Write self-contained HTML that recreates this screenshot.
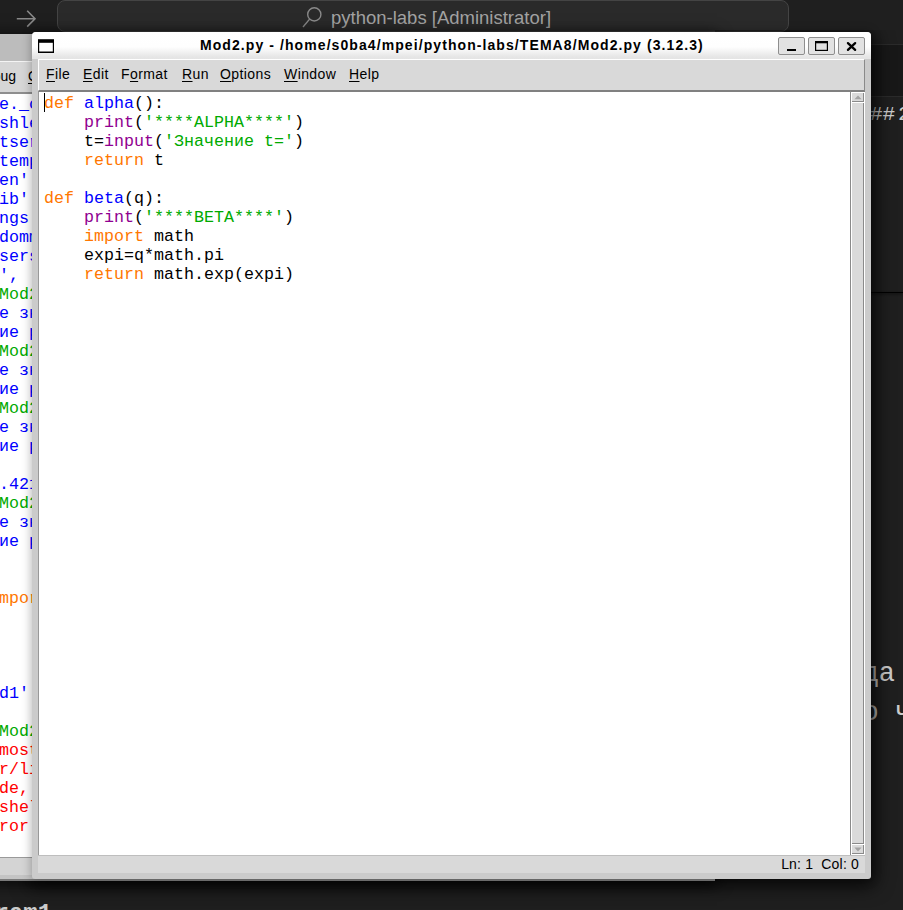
<!DOCTYPE html>
<html><head><meta charset="utf-8">
<style>
html,body{margin:0;padding:0}
body{width:903px;height:910px;overflow:hidden;position:relative;background:#1f1f1f;font-family:"Liberation Sans",sans-serif}
.a{position:absolute}
/* top bar */
#topbar{left:0;top:0;width:903px;height:33px;background:#1f1f1f}
#search{left:57px;top:0px;width:732px;height:32px;background:#2a2a2a;border:1px solid #444;border-radius:8px;box-sizing:border-box}
#stext{left:331px;top:7px;font-size:18.5px;color:#a3a3a3;white-space:nowrap}
/* behind window */
#bw{left:-20px;top:34px;width:735px;height:847px;background:#c6c6c6;box-shadow:0 2px 14px 2px rgba(0,0,0,0.7)}
#bwtitle{left:0;top:0;width:735px;height:27px;background:#bcbcbc}
#bwmenu{left:0;top:27px;width:735px;height:31px;background:#d6d6d6;border-top:1px solid #f4f4f4;border-bottom:2px solid #8e8e8e;box-sizing:border-box;height:33px}
#bwtext{left:0;top:60px;width:735px;height:763px;background:#fff}
#bwstatus{left:0;top:823px;width:735px;height:18px;background:#d4d4d4;border-top:1px solid #9a9a9a;box-sizing:border-box}
#bwedge{left:0;top:841px;width:735px;height:6px;background:#c4c4c4;border-bottom:2px solid #7a7a7a;box-sizing:border-box}
.mono{font-family:"Liberation Mono",monospace;font-size:16.6667px;line-height:19px;white-space:pre}
#bwlines{left:19px;top:61px}
/* main window */
#mw{left:32px;top:32px;width:839px;height:847px;background:#cbcbcb;border-radius:4px 4px 3px 3px;box-shadow:0 0 10px 1px rgba(0,0,0,0.28)}
#title{left:0;top:0;width:839px;height:27px;border-radius:4px 4px 0 0;background:linear-gradient(#ffffff 0%,#fefefe 55%,#e6e6e6 92%,#e4e4e4 100%)}
#ttext{left:168px;top:5px;font-size:14px;letter-spacing:1.08px;font-weight:bold;color:#000;white-space:nowrap}
#icon{left:6px;top:7px;width:16px;height:14px;box-sizing:border-box;border:2px solid #000;border-top:5px solid #000;background:#fff}
.btn{top:5px;width:27px;height:18px;box-sizing:border-box;border:1px solid #8e8e8e;border-radius:2px;background:#e2e2e2}
#menu{left:6px;top:27px;width:827px;height:32px;background:#d9d9d9;box-sizing:border-box;border-top:1px solid #fff;border-left:1px solid #fff;border-right:1px solid #8a8a8a;border-bottom:1px solid #808080}
.mi{top:6px;font-size:14px;letter-spacing:0.4px;color:#000;white-space:nowrap}
.mi u{text-decoration:underline;text-decoration-thickness:1px;text-underline-offset:2px}
#text{left:6px;top:59px;width:812px;height:764px;background:#fff;box-sizing:border-box;border-left:1px solid #999;border-top:1px solid #808080}
#sb{left:818px;top:59px;width:15px;height:764px;background:#fff;box-sizing:border-box;border-left:1px solid #8a8a8a;border-top:1px solid #808080}
.sbb{left:1px;width:12px;box-sizing:border-box;background:#dadada;border-right:1px solid #8a8a8a;border-bottom:1px solid #8a8a8a}
#status{left:6px;top:823px;width:827px;height:18px;background:#d9d9d9;border-top:1px solid #bebebe;box-sizing:border-box}
#stat{right:6px;top:0px;font-size:14px;letter-spacing:0.18px;color:#000;white-space:nowrap}
#code{left:12px;top:62px}
.k{color:#ff7700}.b{color:#900090}.s{color:#00aa00}.d{color:#0000ff}
#cursor{left:12px;top:61px;width:1px;height:19px;background:#000}
/* dark bg text */
.dt{color:#cccccc;white-space:nowrap}
</style></head>
<body>
<div class="a" id="topbar"></div>
<div class="a" style="left:0;top:44px;width:903px;height:53px;background:#181818;border-top:1px solid #2b2b2b;border-bottom:1px solid #2b2b2b;box-sizing:border-box"></div>
<div class="a" style="left:0;top:292px;width:903px;height:1px;background:#000;box-shadow:0 1px 3px rgba(0,0,0,0.8)"></div>
<div class="a" id="search"></div>
<svg class="a" style="left:14px;top:8px" width="24" height="22" viewBox="0 0 24 22"><path d="M2.8 10.7H21M13.2 2.8L21 10.7L13.2 18.6" fill="none" stroke="#8a8a8a" stroke-width="1.6"/></svg>
<svg class="a" style="left:300px;top:5px" width="24" height="24" viewBox="0 0 24 24"><circle cx="14.3" cy="9.4" r="6.6" fill="none" stroke="#8a8a8a" stroke-width="1.4"/><path d="M9.6 14.1L3 22" stroke="#8a8a8a" stroke-width="1.4"/></svg>
<div class="a" id="stext">python-labs [Administrator]</div>

<div class="a dt" id="h2a" style="left:870px;top:103px;font-family:'Liberation Mono',monospace;font-size:21px;line-height:24px">##</div>
<div class="a dt" id="h2b" style="left:898px;top:103px;font-family:'Liberation Mono',monospace;font-size:21px;line-height:24px">2</div>
<div class="a dt" id="da" style="left:862.5px;top:653.5px;font-family:'Liberation Mono',monospace;font-size:27px;line-height:40px">да</div>
<div class="a dt" id="och" style="left:862.5px;top:692.5px;font-family:'Liberation Mono',monospace;font-size:27px;line-height:40px">о ч</div>
<div class="a dt" id="ram" style="left:-5.5px;top:900px;font-family:'Liberation Mono',monospace;font-size:24px;font-weight:bold;line-height:28px">ram1</div>

<!-- behind window -->
<div class="a" id="bw">
  <div class="a" id="bwtitle"></div>
  <div class="a" id="bwmenu"></div>
  <div class="a" id="bwtext"></div>
  <div class="a" id="bwstatus"></div>
  <div class="a" id="bwedge"></div>
  <div class="a" style="right:699px;top:33.5px;font-size:14px;white-space:nowrap">Debug</div><div class="a mi2" style="left:48px;top:33.5px;font-size:14px;white-space:nowrap"><span style="text-decoration:underline;text-decoration-thickness:1px;text-underline-offset:2px">O</span>ptions</div>
  <div class="a mono" id="bwlines"><span class="d">e._c</span>
<span class="d">shle</span>
<span class="d">tser</span>
<span class="d">temp</span>
<span class="d">en' </span>
<span class="d">ib' </span>
<span class="d">ngs </span>
<span class="d">domm</span>
<span class="d">sers</span>
<span class="d">',  </span>
<span class="s">Mod2</span>
<span class="d">е зн</span>
<span class="d">ие р</span>
<span class="s">Mod2</span>
<span class="d">е зн</span>
<span class="d">ие р</span>
<span class="s">Mod2</span>
<span class="d">е зн</span>
<span class="d">ие р</span>

<span class="d">.421</span>
<span class="s">Mod2</span>
<span class="d">е зн</span>
<span class="d">ие р</span>


<span class="k">mpor</span>




<span class="d">d1' </span>

<span class="s">Mod2</span>
<span style="color:#ff0000">most</span>
<span style="color:#ff0000">r/li</span>
<span style="color:#ff0000">de, </span>
<span style="color:#ff0000">shel</span>
<span style="color:#ff0000">ror </span></div>
</div>

<div class="a" style="left:0;top:0;width:903px;height:910px;clip-path:polygon(715px 30px,903px 30px,903px 910px,0px 910px,0px 881px,715px 881px)"><div class="a" style="left:32px;top:34px;width:839px;height:845px;border-radius:4px;box-shadow:0 3px 18px 5px rgba(0,0,0,0.7)"></div></div>
<!-- main window -->
<div class="a" id="mw">
  <div class="a" id="title"></div>
  <svg class="a" style="left:6px;top:7px" width="16" height="14" viewBox="0 0 16 14"><rect x="0" y="0.2" width="16" height="13.8" fill="#000"/><rect x="1.2" y="3.8" width="13.6" height="8.7" fill="#fff"/></svg>
  <div class="a" id="ttext">Mod2.py - /home/s0ba4/mpei/python-labs/TEMA8/Mod2.py (3.12.3)</div>
  <div class="a btn" style="left:746px"><div class="a" style="left:8px;top:11px;width:9px;height:2px;background:#000"></div></div>
  <div class="a btn" style="left:776px"><svg class="a" style="left:6px;top:3px" width="13" height="10" viewBox="0 0 13 10"><rect x="0.6" y="0.6" width="11.8" height="8.8" fill="none" stroke="#000" stroke-width="1.2"/><rect x="0" y="0" width="13" height="2.3" fill="#000"/></svg></div>
  <div class="a btn" style="left:806px"><svg class="a" style="left:7px;top:3px" width="13" height="12" viewBox="0 0 13 12"><path d="M1.95 2.15L9.15 8.85M9.15 2.15L1.95 8.85" stroke="#000" stroke-width="2.3" stroke-linecap="round"/></svg></div>
  <div class="a" id="menu">
    <div class="a mi" style="left:7px"><u>F</u>ile</div>
    <div class="a mi" style="left:44px"><u>E</u>dit</div>
    <div class="a mi" style="left:82px">F<u>o</u>rmat</div>
    <div class="a mi" style="left:143px"><u>R</u>un</div>
    <div class="a mi" style="left:181px"><u>O</u>ptions</div>
    <div class="a mi" style="left:245px"><u>W</u>indow</div>
    <div class="a mi" style="left:310px"><u>H</u>elp</div>
  </div>
  <div class="a" id="text"></div>
  <div class="a" id="sb">
    <div class="a sbb" style="top:1px;height:9px"><svg class="a" style="left:1.5px;top:1.5px" width="8" height="5" viewBox="0 0 8 5"><path d="M0.4 4.3L4 0.4L7.6 4.3Z" fill="#a3a3a3"/></svg></div>
    <div class="a sbb" style="top:11px;height:741px"></div>
    <div class="a sbb" style="top:753px;height:9px"><svg class="a" style="left:1.5px;top:1.5px" width="8" height="5" viewBox="0 0 8 5"><path d="M0.4 0.5L4 4.4L7.6 0.5Z" fill="#a3a3a3"/></svg></div>
  </div>
  <div class="a" id="status"><div class="a" id="stat">Ln: 1&nbsp;&nbsp;Col: 0</div></div>
  <div class="a mono" id="code"><span class="k">def</span> <span class="d">alpha</span>():
    <span class="b">print</span>(<span class="s">'****ALPHA****'</span>)
    t=<span class="b">input</span>(<span class="s">'Значение t='</span>)
    <span class="k">return</span> t

<span class="k">def</span> <span class="d">beta</span>(q):
    <span class="b">print</span>(<span class="s">'****BETA****'</span>)
    <span class="k">import</span> math
    expi=q*math.pi
    <span class="k">return</span> math.exp(expi)</div>
  <div class="a" id="cursor"></div>
</div>
</body></html>
